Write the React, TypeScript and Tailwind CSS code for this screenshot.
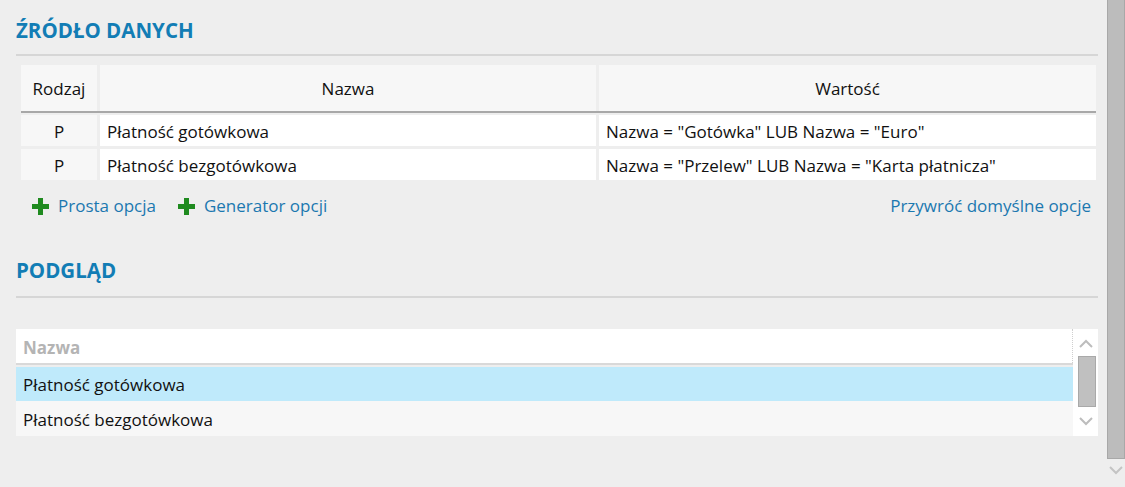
import React from "react";

const font = { fontFamily: '"Open Sans", "Noto Sans", sans-serif' };

function Plus() {
  return (
    <svg width="17" height="17" viewBox="0 0 17 17" className="shrink-0">
      <rect x="6" y="0" width="5" height="17" fill="#1f8a1f" />
      <rect x="0" y="6" width="17" height="5" fill="#1f8a1f" />
    </svg>
  );
}

function ChevronUp({ color = "#bdbdbd" }: { color?: string }) {
  return (
    <svg width="14" height="9" viewBox="0 0 14 9">
      <path d="M1 8 L7 2 L13 8" fill="none" stroke={color} strokeWidth="2" />
    </svg>
  );
}
function ChevronDown({ color = "#bdbdbd" }: { color?: string }) {
  return (
    <svg width="14" height="9" viewBox="0 0 14 9">
      <path d="M1 1 L7 7 L13 1" fill="none" stroke={color} strokeWidth="2" />
    </svg>
  );
}

export default function App() {
  const rows = [
    ["P", "Płatność gotówkowa", 'Nazwa = "Gotówka" LUB Nazwa = "Euro"'],
    ["P", "Płatność bezgotówkowa", 'Nazwa = "Przelew" LUB Nazwa = "Karta płatnicza"'],
  ];
  return (
    <div className="w-[1125px] h-[487px] bg-[#eeeeee] flex overflow-hidden text-[#111111]" style={font}>
      <div className="flex-1 flex flex-col pl-4 pr-[9px]">
        <div className="pt-[17px] h-[54px] text-[20.5px] font-bold text-[#127db5] leading-[26px]">ŹRÓDŁO DANYCH</div>
        <div className="h-[2px] bg-[#d6d6d6]" />
        <div className="pl-[5px] pr-[2px] pt-[9px]">
          <div className="flex gap-[3px] h-[46px] bg-[#eeeeee] text-[17px]">
            <div className="w-[76px] bg-[#f7f7f7] flex items-center justify-center pt-[2px]">Rodzaj</div>
            <div className="w-[496px] bg-[#f7f7f7] flex items-center justify-center pt-[2px]">Nazwa</div>
            <div className="flex-1 bg-[#f7f7f7] flex items-center justify-center pt-[2px]">Wartość</div>
          </div>
          <div className="h-[2px] bg-[#a8a8a8]" />
          <div className="flex flex-col gap-[3px] pt-[2px] text-[17px]">
            {rows.map((r, i) => (
              <div key={i} className="flex gap-[3px] h-[31px]">
                <div className="w-[76px] bg-[#f7f7f7] flex items-center justify-center pt-[2px]">{r[0]}</div>
                <div className="w-[496px] bg-white flex items-center pl-[7px] pt-[2px]">{r[1]}</div>
                <div className="flex-1 bg-white flex items-center pl-[7px] pt-[2px]">{r[2]}</div>
              </div>
            ))}
          </div>
        </div>
        <div className="flex items-center h-[52px] pl-4 pr-[7px] text-[17px] text-[#1b78b0]">
          <div className="flex items-center gap-[9px]">
            <Plus />
            <span>Prosta opcja</span>
          </div>
          <div className="flex items-center gap-[9px] ml-[22px]">
            <Plus />
            <span>Generator opcji</span>
          </div>
          <div className="ml-auto">Przywróć domyślne opcje</div>
        </div>
        <div className="pt-[25px] h-[64px] text-[20.5px] font-bold text-[#127db5] leading-[26px]">PODGLĄD</div>
        <div className="h-[2px] bg-[#d6d6d6]" />
        <div className="mt-[31px] flex h-[107px]">
          <div className="flex-1 flex flex-col">
            <div className="h-[34px] bg-white flex items-center pl-[7px] pt-[4px] text-[17px] font-bold text-[#b4b4b4] border-r border-dotted border-[#cfcfcf]">
              Nazwa
            </div>
            <div className="h-[2px] bg-[#d9d9d9]" />
            <div className="h-[2px] bg-[#eeeeee]" />
            <div className="h-[34px] bg-[#bfeafb] flex items-center pl-[7px] pt-[2px] text-[17px]">Płatność gotówkowa</div>
            <div className="h-[35px] bg-[#f7f7f7] flex items-center pl-[7px] pt-[2px] text-[17px]">Płatność bezgotówkowa</div>
          </div>
          <div className="w-[25px] bg-white flex flex-col items-center pt-[10px]">
            <ChevronUp />
            <div className="mt-[8px] ml-[2px] w-[18px] h-[51px] bg-[#c0c0c0] border border-[#a9a9a9]" />
            <div className="mt-[10px]">
              <ChevronDown />
            </div>
          </div>
        </div>
      </div>
      <div className="w-[18px] flex flex-col items-center">
        <div className="w-[18px] h-[459px] bg-[#bcbcbc] border-x border-b border-[#a8a8a8]" />
        <div className="mt-[7px]">
          <ChevronDown color="#c4c4c4" />
        </div>
      </div>
    </div>
  );
}
